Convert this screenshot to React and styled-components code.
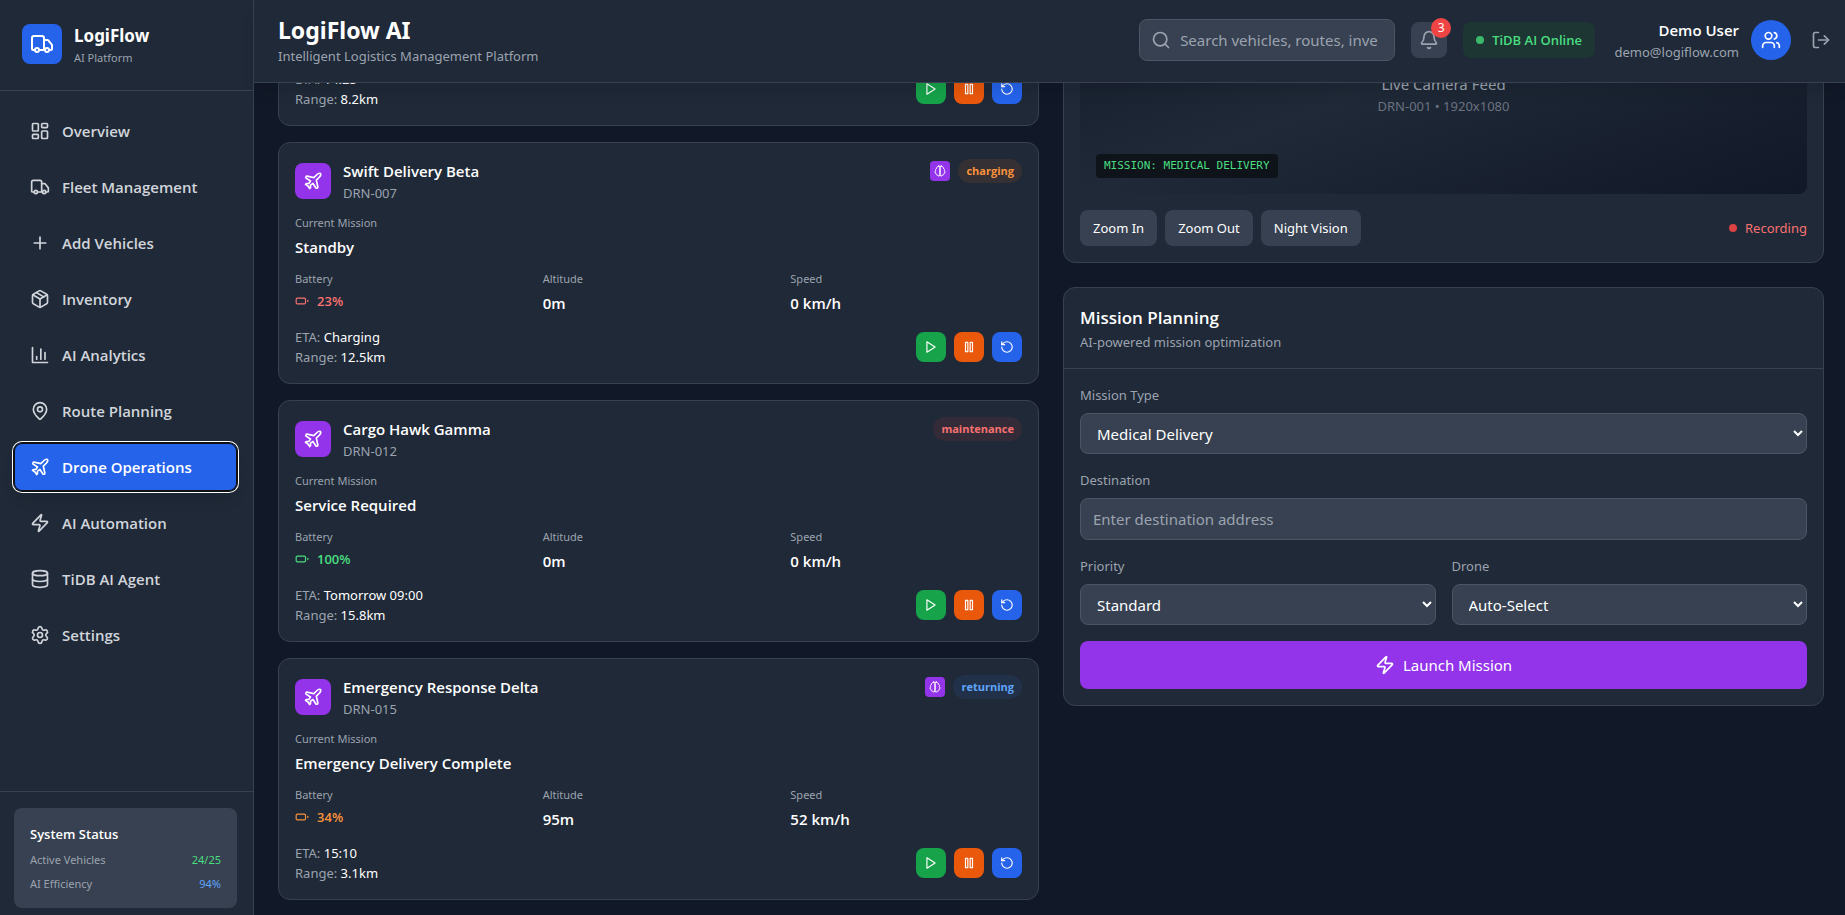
import { useLayoutEffect, useRef } from 'react';
import styled, { createGlobalStyle, css } from 'styled-components';
import {
	Bell,
	Camera,
	Database,
	LayoutDashboard,
	LogOut,
	MapPin,
	Package,
	Plane,
	Plus,
	RotateCcw,
	Search,
	Settings,
	Truck,
	Users,
	Zap,
} from 'lucide-react';

const navItems = [
	{ label: 'Overview', icon: LayoutDashboard },
	{ label: 'Fleet Management', icon: Truck },
	{ label: 'Add Vehicles', icon: Plus },
	{ label: 'Inventory', icon: Package },
	{ label: 'AI Analytics', icon: BarsIcon },
	{ label: 'Route Planning', icon: MapPin },
	{ label: 'Drone Operations', icon: Plane, active: true },
	{ label: 'AI Automation', icon: Zap },
	{ label: 'TiDB AI Agent', icon: Database },
	{ label: 'Settings', icon: Settings },
];

const drones = [
	{
		id: 'DRN-001',
		name: 'MedExpress Alpha',
		status: 'active',
		ai: true,
		mission: 'Medical Delivery',
		battery: 87,
		altitude: '120m',
		speed: '45 km/h',
		eta: '14:25',
		range: '8.2km',
	},
	{
		id: 'DRN-007',
		name: 'Swift Delivery Beta',
		status: 'charging',
		ai: true,
		mission: 'Standby',
		battery: 23,
		altitude: '0m',
		speed: '0 km/h',
		eta: 'Charging',
		range: '12.5km',
	},
	{
		id: 'DRN-012',
		name: 'Cargo Hawk Gamma',
		status: 'maintenance',
		ai: false,
		mission: 'Service Required',
		battery: 100,
		altitude: '0m',
		speed: '0 km/h',
		eta: 'Tomorrow 09:00',
		range: '15.8km',
	},
	{
		id: 'DRN-015',
		name: 'Emergency Response Delta',
		status: 'returning',
		ai: true,
		mission: 'Emergency Delivery Complete',
		battery: 34,
		altitude: '95m',
		speed: '52 km/h',
		eta: '15:10',
		range: '3.1km',
	},
];

const statusColors = {
	active: ['#4ade80', 'rgba(34, 197, 94, 0.1)'],
	charging: ['#fb923c', 'rgba(249, 115, 22, 0.1)'],
	maintenance: ['#f87171', 'rgba(239, 68, 68, 0.1)'],
	returning: ['#60a5fa', 'rgba(59, 130, 246, 0.1)'],
};

const batteryColor = (level) => {
	if (level > 60) return '#4ade80';
	if (level > 30) return '#fb923c';
	return '#f87171';
};

function Icon({ size = 14, children }) {
	return (
		<svg
			width={size}
			height={size}
			viewBox="0 0 24 24"
			fill="none"
			stroke="currentColor"
			strokeWidth="2"
			strokeLinecap="round"
			strokeLinejoin="round"
		>
			{children}
		</svg>
	);
}

function BarsIcon({ size }) {
	return (
		<Icon size={size}>
			<path d="M3 3v18h18" />
			<path d="M18 17V9" />
			<path d="M13 17V5" />
			<path d="M8 17v-3" />
		</Icon>
	);
}

function PlayIcon() {
	return (
		<Icon>
			<polygon points="5 3 19 12 5 21 5 3" />
		</Icon>
	);
}

function PauseIcon() {
	return (
		<Icon>
			<rect x="6" y="4" width="4" height="16" />
			<rect x="14" y="4" width="4" height="16" />
		</Icon>
	);
}

function BatteryIcon() {
	return (
		<Icon>
			<rect x="2" y="7" width="16" height="10" rx="2" />
			<path d="M22 11v2" />
		</Icon>
	);
}

function BrainIcon() {
	return (
		<Icon size={12}>
			<path d="M9.5 2A2.5 2.5 0 0 1 12 4.5v15a2.5 2.5 0 0 1-4.96.44 2.5 2.5 0 0 1-2.96-3.08 3 3 0 0 1-.34-5.58 2.5 2.5 0 0 1 1.32-4.24 2.5 2.5 0 0 1 1.98-3A2.5 2.5 0 0 1 9.5 2Z" />
			<path d="M14.5 2A2.5 2.5 0 0 0 12 4.5v15a2.5 2.5 0 0 0 4.96.44 2.5 2.5 0 0 0 2.96-3.08 3 3 0 0 0 .34-5.58 2.5 2.5 0 0 0-1.32-4.24 2.5 2.5 0 0 0-1.98-3A2.5 2.5 0 0 0 14.5 2Z" />
		</Icon>
	);
}

function Sidebar() {
	return (
		<Aside>
			<Brand>
				<BrandIcon>
					<Truck size={24} />
				</BrandIcon>
				<div>
					<BrandName>LogiFlow</BrandName>
					<Small>AI Platform</Small>
				</div>
			</Brand>
			<Nav>
				{navItems.map(({ label, icon: NavIcon, active }) => (
					<NavButton key={label} type="button" $active={active}>
						<NavIcon size={20} />
						{label}
					</NavButton>
				))}
			</Nav>
			<AsideFooter>
				<StatusBox>
					<StatusTitle>System Status</StatusTitle>
					<StatusRow>
						<span>Active Vehicles</span>
						<Tint $color="#4ade80">24/25</Tint>
					</StatusRow>
					<StatusRow>
						<span>AI Efficiency</span>
						<Tint $color="#60a5fa">94%</Tint>
					</StatusRow>
				</StatusBox>
			</AsideFooter>
		</Aside>
	);
}

function TopBar() {
	return (
		<Header>
			<div>
				<Title>LogiFlow AI</Title>
				<Muted>Intelligent Logistics Management Platform</Muted>
			</div>
			<Tools>
				<SearchBox>
					<Search size={20} />
					<SearchInput
						type="text"
						aria-label="Search"
						placeholder="Search vehicles, routes, inventory..."
					/>
				</SearchBox>
				<BellButton type="button" aria-label="Notifications">
					<Bell size={20} />
					<Count>3</Count>
				</BellButton>
				<Online>
					<Dot $color="#3fb86c" />
					TiDB AI Online
				</Online>
				<User>
					<UserText>
						<UserName>Demo User</UserName>
						<Muted>demo@logiflow.com</Muted>
					</UserText>
					<Avatar>
						<Users size={20} />
					</Avatar>
					<LogoutButton type="button" aria-label="Log out">
						<LogOut size={20} />
					</LogoutButton>
				</User>
			</Tools>
		</Header>
	);
}

function DroneCard({ drone }) {
	const [color, tint] = statusColors[drone.status];

	return (
		<Card as="article">
			<CardBody $gap={12}>
				<DroneHead>
					<DroneTitle>
						<DroneIcon>
							<Plane size={20} />
						</DroneIcon>
						<div>
							<DroneName>{drone.name}</DroneName>
							<Muted>{drone.id}</Muted>
						</div>
					</DroneTitle>
					<Badges>
						{drone.ai && (
							<AiBadge>
								<BrainIcon />
							</AiBadge>
						)}
						<Badge $color={color} $tint={tint}>
							{drone.status}
						</Badge>
					</Badges>
				</DroneHead>
				<Stat>
					<Small>Current Mission</Small>
					<Strong>{drone.mission}</Strong>
				</Stat>
				<Stats>
					<Stat>
						<Small>Battery</Small>
						<BatteryLevel $color={batteryColor(drone.battery)}>
							<BatteryIcon />
							{drone.battery}%
						</BatteryLevel>
					</Stat>
					<Stat>
						<Small>Altitude</Small>
						<Strong>{drone.altitude}</Strong>
					</Stat>
					<Stat>
						<Small>Speed</Small>
						<Strong>{drone.speed}</Strong>
					</Stat>
				</Stats>
				<Between>
					<div>
						<Muted>
							ETA: <Tint $color="#fff">{drone.eta}</Tint>
						</Muted>
						<Muted>
							Range: <Tint $color="#fff">{drone.range}</Tint>
						</Muted>
					</div>
					<Row $gap={8}>
						<ActionButton type="button" $color="#16a34a" aria-label="Start">
							<PlayIcon />
						</ActionButton>
						<ActionButton type="button" $color="#ea580c" aria-label="Pause">
							<PauseIcon />
						</ActionButton>
						<ActionButton type="button" $color="#2563eb" aria-label="Return">
							<RotateCcw size={14} />
						</ActionButton>
					</Row>
				</Between>
			</CardBody>
		</Card>
	);
}

function CameraCard() {
	return (
		<Card>
			<CardHead>
				<Heading>Live Drone Feed</Heading>
				<Muted>Real-time camera view</Muted>
			</CardHead>
			<CardBody $gap={16}>
				<Feed>
					<Camera size={48} />
					<FeedTitle>Live Camera Feed</FeedTitle>
					<FeedInfo>DRN-001 • 1920x1080</FeedInfo>
					<FeedTag>MISSION: MEDICAL DELIVERY</FeedTag>
				</Feed>
				<Between>
					<Row $gap={8}>
						<GrayButton type="button">Zoom In</GrayButton>
						<GrayButton type="button">Zoom Out</GrayButton>
						<GrayButton type="button">Night Vision</GrayButton>
					</Row>
					<Recording>
						<Dot $color="#dc4144" />
						Recording
					</Recording>
				</Between>
			</CardBody>
		</Card>
	);
}

function MissionPlanning() {
	return (
		<Card>
			<CardHead>
				<Heading>Mission Planning</Heading>
				<Muted>AI-powered mission optimization</Muted>
			</CardHead>
			<CardBody as="form" $gap={16} onSubmit={(e) => e.preventDefault()}>
				<Field>
					<Label htmlFor="type">Mission Type</Label>
					<Select id="type">
						<option>Medical Delivery</option>
						<option>Package Delivery</option>
						<option>Surveillance</option>
					</Select>
				</Field>
				<Field>
					<Label htmlFor="destination">Destination</Label>
					<Input id="destination" type="text" placeholder="Enter destination address" />
				</Field>
				<TwoColumns>
					<Field>
						<Label htmlFor="priority">Priority</Label>
						<Select id="priority">
							<option>Standard</option>
							<option>High</option>
						</Select>
					</Field>
					<Field>
						<Label htmlFor="drone">Drone</Label>
						<Select id="drone">
							<option>Auto-Select</option>
							<option>DRN-001</option>
						</Select>
					</Field>
				</TwoColumns>
				<LaunchButton type="submit">
					<Zap size={20} />
					Launch Mission
				</LaunchButton>
			</CardBody>
		</Card>
	);
}

function App() {
	const mainRef = useRef(null);

	// open on the second drone of the fleet
	useLayoutEffect(() => {
		mainRef.current.scrollTop = 267;
	}, []);

	return (
		<>
			<GlobalStyle />
			<Page>
				<Sidebar />
				<Content>
					<TopBar />
					<Main ref={mainRef}>
						<Columns>
							<Column $gap={16}>
								<Heading>Drone Fleet</Heading>
								{drones.map((drone) => (
									<DroneCard key={drone.id} drone={drone} />
								))}
							</Column>
							<Column $gap={24}>
								<CameraCard />
								<MissionPlanning />
							</Column>
						</Columns>
					</Main>
				</Content>
			</Page>
		</>
	);
}

export default App;

const GlobalStyle = createGlobalStyle`
	*, *::before, *::after {
		box-sizing: border-box;
	}
	body {
		margin: 0;
		background: #111827;
		color: #fff;
		font-family: 'Noto Sans', 'Open Sans', sans-serif;
		font-size: 15px;
		line-height: 24px;
	}
	h1, h2, h3, p {
		margin: 0;
	}
	button, input, select {
		font: inherit;
		color: inherit;
	}
	button {
		border: 0;
		cursor: pointer;
	}
	svg {
		display: block;
		flex-shrink: 0;
	}
`;

const semibold = css`
	font-family: 'Open Sans', 'Noto Sans', sans-serif;
	font-weight: 600;
`;

const Page = styled.div`
	display: flex;
	height: 100vh;
`;

const Aside = styled.aside`
	display: flex;
	flex-direction: column;
	flex-shrink: 0;
	width: 254px;
	background: #1f2937;
	border-right: 1px solid #374151;
`;

const Brand = styled.div`
	display: flex;
	align-items: center;
	gap: 12px;
	padding: 22px 24px 24px 22px;
	border-bottom: 1px solid #374151;
`;

const BrandIcon = styled.div`
	padding: 8px;
	border-radius: 8px;
	background: #2563eb;
`;

const BrandName = styled.div`
	font-size: 17px;
	font-weight: 700;
	line-height: 28px;
`;

const Small = styled.p`
	font-size: 11px;
	line-height: 16px;
	color: #9ca3af;
`;

const Muted = styled.p`
	font-size: 13px;
	line-height: 20px;
	color: #9ca3af;
`;

const Tint = styled.span`
	color: ${(props) => props.$color};
`;

const Nav = styled.nav`
	display: flex;
	flex: 1;
	flex-direction: column;
	gap: 8px;
	padding: 16px 16px 16px 14px;
`;

const NavButton = styled.button`
	display: flex;
	align-items: center;
	gap: 12px;
	padding: 12px 16px;
	border-radius: 8px;
	background: transparent;
	color: #d1d5db;
	text-align: left;
	${semibold}
	${(props) =>
		props.$active &&
		css`
			background: #2563eb;
			color: #fff;
			box-shadow: inset 0 0 0 1px #101010, 0 0 0 1px #101010, 0 0 0 2px #fff,
				0 10px 15px -3px rgba(0, 0, 0, 0.1);
		`}
`;

const AsideFooter = styled.div`
	padding: 16px 16px 7px 14px;
	border-top: 1px solid #374151;
`;

const StatusBox = styled.div`
	display: flex;
	flex-direction: column;
	gap: 8px;
	padding: 16px;
	border-radius: 8px;
	background: #374151;
`;

const StatusTitle = styled.h3`
	${semibold}
	font-size: 13px;
	line-height: 20px;
`;

const StatusRow = styled.div`
	display: flex;
	justify-content: space-between;
	font-size: 11px;
	line-height: 16px;
	color: #9ca3af;
`;

const Content = styled.div`
	display: flex;
	flex: 1;
	flex-direction: column;
	min-width: 0;
`;

const Header = styled.header`
	position: relative;
	z-index: 1;
	display: flex;
	align-items: center;
	justify-content: space-between;
	padding: 14px 6px 16px 24px;
	background: #1f2937;
	border-bottom: 1px solid #374151;
	box-shadow: 0 10px 15px -3px rgba(0, 0, 0, 0.1);
`;

const Title = styled.h1`
	font-size: 23px;
	font-weight: 700;
	line-height: 32px;
`;

const Tools = styled.div`
	display: flex;
	align-items: center;
	gap: 16px;
`;

const SearchBox = styled.label`
	display: flex;
	align-items: center;
	gap: 9px;
	width: 256px;
	padding: 8px 16px 8px 11px;
	border: 1px solid #4b5563;
	border-radius: 8px;
	background: #374151;
	color: #9ca3af;
`;

const SearchInput = styled.input`
	flex: 1;
	min-width: 0;
	padding: 0;
	border: 0;
	outline: 0;
	background: transparent;
	color: #fff;
	&::placeholder {
		color: #9ca3af;
	}
`;

const BellButton = styled.button`
	position: relative;
	padding: 8px;
	border-radius: 8px;
	background: #374151;
	color: #9ca3af;
`;

const Count = styled.span`
	position: absolute;
	top: -4px;
	right: -4px;
	width: 20px;
	border-radius: 50%;
	background: #ef4444;
	color: #fff;
	font-size: 12px;
	line-height: 20px;
	text-align: center;
`;

const Online = styled.div`
	display: flex;
	align-items: center;
	gap: 8px;
	padding: 8px 13px;
	border-radius: 8px;
	background: #1d3533;
	color: #4ade80;
	${semibold}
	font-size: 13px;
	line-height: 20px;
`;

const Dot = styled.span`
	width: 8px;
	height: 8px;
	border-radius: 50%;
	background: ${(props) => props.$color};
`;

const User = styled.div`
	display: flex;
	align-items: center;
	gap: 12px;
`;

const UserText = styled.div`
	min-width: 128px;
	text-align: right;
`;

const UserName = styled.p`
	${semibold}
`;

const Avatar = styled.div`
	padding: 10px;
	border-radius: 50%;
	background: #2563eb;
`;

const LogoutButton = styled.button`
	padding: 8px;
	background: transparent;
	color: #9ca3af;
`;

const Main = styled.main`
	flex: 1;
	min-height: 0;
	overflow-y: auto;
	scrollbar-width: none;
	padding: 24px 21px 24px 24px;
`;

const Columns = styled.div`
	display: grid;
	grid-template-columns: 1fr 1fr;
	align-items: start;
	gap: 24px;
`;

const Column = styled.section`
	display: flex;
	flex-direction: column;
	gap: ${(props) => props.$gap}px;
	min-width: 0;
`;

const Card = styled.section`
	border: 1px solid #374151;
	border-radius: 12px;
	background: #1f2937;
`;

const CardHead = styled.div`
	padding: 16px;
	border-bottom: 1px solid #374151;
`;

const CardBody = styled.div`
	display: flex;
	flex-direction: column;
	gap: ${(props) => props.$gap}px;
	padding: 16px;
`;

const Heading = styled.h2`
	${semibold}
	font-size: 17px;
	line-height: 28px;
`;

const Row = styled.div`
	display: flex;
	gap: ${(props) => props.$gap}px;
`;

const Between = styled.div`
	display: flex;
	align-items: center;
	justify-content: space-between;
`;

const DroneHead = styled.div`
	display: flex;
	align-items: flex-start;
	justify-content: space-between;
`;

const DroneTitle = styled.div`
	display: flex;
	align-items: center;
	gap: 12px;
`;

const DroneIcon = styled.div`
	padding: 8px;
	border-radius: 8px;
	background: #9333ea;
`;

const DroneName = styled.h3`
	${semibold}
	font-size: 15px;
`;

const Badges = styled.div`
	display: flex;
	align-items: center;
	gap: 8px;
`;

const AiBadge = styled.div`
	padding: 4px;
	border-radius: 4px;
	background: #9333ea;
`;

const Badge = styled.span`
	padding: 4px 8px;
	border-radius: 12px;
	background: ${(props) => props.$tint};
	color: ${(props) => props.$color};
	font-family: 'Open Sans', 'Noto Sans', sans-serif;
	font-size: 11px;
	font-weight: 700;
	line-height: 16px;
`;

const Stats = styled.div`
	display: grid;
	grid-template-columns: repeat(3, 1fr);
	gap: 16px;
`;

const Stat = styled.div`
	display: flex;
	flex-direction: column;
	gap: 4px;
`;

const Strong = styled.p`
	${semibold}
`;

const BatteryLevel = styled.div`
	display: flex;
	align-items: center;
	gap: 8px;
	color: ${(props) => props.$color};
	${semibold}
	font-size: 13px;
	line-height: 20px;
`;

const ActionButton = styled.button`
	padding: 8px;
	border-radius: 8px;
	background: ${(props) => props.$color};
`;

const Feed = styled.div`
	position: relative;
	display: flex;
	flex-direction: column;
	align-items: center;
	justify-content: center;
	height: 256px;
	border-radius: 8px;
	background: linear-gradient(to bottom right, #111827, #1f2937, #111827);
	color: #6b7280;
`;

const FeedTitle = styled.p`
	margin-top: 8px;
	color: #9ca3af;
`;

const FeedInfo = styled.p`
	font-size: 13px;
	line-height: 20px;
`;

const FeedTag = styled.span`
	position: absolute;
	left: 16px;
	bottom: 16px;
	padding: 4px 8px;
	border-radius: 4px;
	background: rgba(0, 0, 0, 0.5);
	color: #4ade80;
	font-family: 'DejaVu Sans Mono', monospace;
	font-size: 11px;
	line-height: 16px;
`;

const GrayButton = styled.button`
	padding: 8px 13px;
	border-radius: 8px;
	background: #374151;
	font-size: 13px;
	line-height: 20px;
`;

const Recording = styled.div`
	display: flex;
	align-items: center;
	gap: 8px;
	color: #f87171;
	font-size: 13px;
	line-height: 20px;
`;

const Field = styled.div`
	display: flex;
	flex-direction: column;
	gap: 8px;
	min-width: 0;
`;

const Label = styled.label`
	font-size: 13px;
	line-height: 20px;
	color: #9ca3af;
`;

const control = css`
	width: 100%;
	border: 1px solid #4b5563;
	border-radius: 8px;
	background: #374151;
	color: #fff;
`;

const Input = styled.input`
	${control}
	height: 42px;
	padding: 8px 12px;
	&::placeholder {
		color: #9ca3af;
	}
`;

const Select = styled.select`
	${control}
	height: 41px;
	padding: 8px 0 8px 12px;
`;

const TwoColumns = styled.div`
	display: grid;
	grid-template-columns: 1fr 1fr;
	gap: 16px;
`;

const LaunchButton = styled.button`
	display: flex;
	align-items: center;
	justify-content: center;
	gap: 8px;
	padding: 12px;
	border-radius: 8px;
	background: #9333ea;
`;
